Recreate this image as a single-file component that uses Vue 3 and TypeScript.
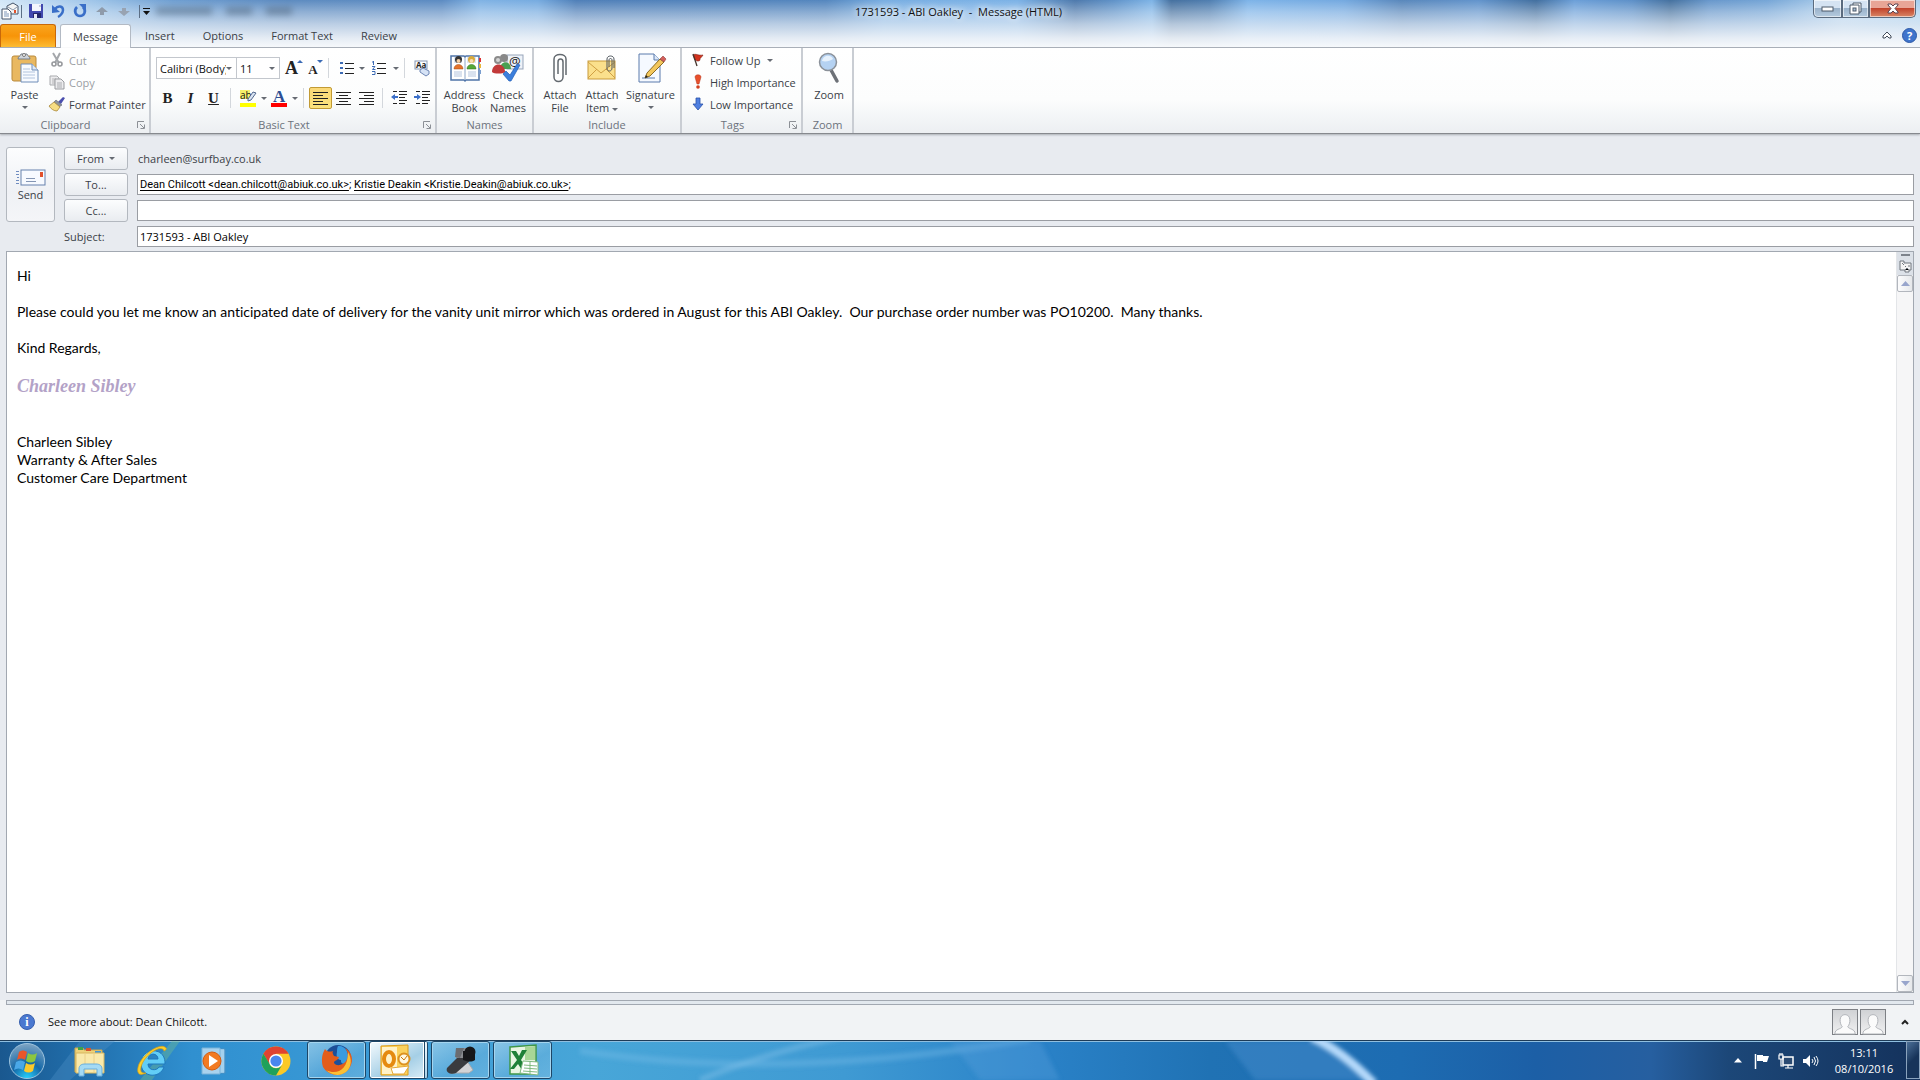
<script setup lang="ts">
import { ref } from 'vue'

const fonts = ['Calibri (Body)', 'Arial', 'Verdana']
const sizes = ['11', '12', '14']
const fontName = ref(fonts[0])
const fontSize = ref(sizes[0])
const subject = ref('1731593 - ABI Oakley')
const cc = ref('')
const tabs = ['Insert', 'Options', 'Format Text', 'Review']
const recipients = [
  { label: 'Dean Chilcott <dean.chilcott@abiuk.co.uk>', href: 'mailto:dean.chilcott@abiuk.co.uk' },
  { label: 'Kristie Deakin <Kristie.Deakin@abiuk.co.uk>', href: 'mailto:Kristie.Deakin@abiuk.co.uk' },
]
</script>

<template>
  <div class="screen">
    <header class="glass">
      <div class="titlebar">
        <div class="quick">
          <svg class="app-ico" width="18" height="18" viewBox="0 0 18 18"><path d="M6 4l6-3 5 3v8H6z" fill="#f4f4f4" stroke="#44546a"/><path d="M7 5l5 3 4-3" fill="none" stroke="#8a98ac"/><rect x="13" y="8" width="2" height="3" fill="#e0502a"/><path d="M1 7h6l3 3v7H1z" fill="#fff" stroke="#44546a"/><path d="M3 10h3M3 12h5M3 14h5" stroke="#7b95b8"/></svg>
          <i class="bar"></i>
          <button class="q" aria-label="Save"><svg width="14" height="14" viewBox="0 0 14 14"><path d="M0 0h14v14H1l-1-1z" fill="#4148ae"/><path d="M3 0h9v7H3z" fill="#f4f6fc"/><path d="M10 2h2" stroke="#99b"/><path d="M4 9h8v5H4z" fill="#23276c"/><path d="M5 10h3v4H5z" fill="#e8eaf6"/></svg></button>
          <button class="q" aria-label="Undo"><svg width="14" height="14" viewBox="0 0 14 14"><path d="M4 5c3-4 8-3 8 1 0 3-3 6-5 7" fill="none" stroke="#3a6fc8" stroke-width="2.500"/><path d="M1 1l0 8 8-1z" fill="#3a6fc8"/></svg></button>
          <button class="q" aria-label="Redo"><svg width="14" height="14" viewBox="0 0 14 14"><path d="M4 3c-4 4-1 9 3 9s7-5 3-9" fill="none" stroke="#3a6fc8" stroke-width="2.600"/><path d="M6 0h7v7z" fill="#3a6fc8"/></svg></button>
          <button class="q" aria-label="Previous item"><svg width="14" height="14" viewBox="0 0 14 14"><path d="M7 3l6 5H9v3H5V8H1z" fill="#8f9bab"/></svg></button>
          <button class="q" aria-label="Next item"><svg width="14" height="14" viewBox="0 0 14 14"><path d="M7 12l6-5H9V4H5v3H1z" fill="#98a3b2"/></svg></button>
          <i class="bar tight"></i>
          <button class="more" aria-label="Customize toolbar"><svg width="7" height="7" viewBox="0 0 7 7"><path d="M0 0h7v1H0zM0 3h7L3.500 7z" fill="#111"/></svg></button>
          <div class="ghost"><b></b><b></b><b></b></div>
        </div>
        <h1>1731593 - ABI Oakley&nbsp; -&nbsp; Message (HTML)</h1>
        <div class="winbtns">
          <button class="min" aria-label="Minimize"><svg width="14" height="8" viewBox="0 0 14 8"><rect x="1" y="2" width="11" height="4" fill="#fff" stroke="#4d5a6b"/></svg></button>
          <button class="max" aria-label="Restore"><svg width="14" height="14" viewBox="0 0 14 14"><path d="M4 1h8v9h-2v2H1V3h3z" fill="#fff" stroke="#4d5a6b"/><path d="M4 3h6v7" fill="none" stroke="#4d5a6b"/><rect x="4" y="6" width="3" height="3" fill="#a9c0d6" stroke="#4d5a6b"/></svg></button>
          <button class="close" aria-label="Close"><svg width="12" height="11" viewBox="0 0 12 11"><path d="M1 1h3l2 2 2-2h3v1L8 5.500 11 9v1H8L6 8l-2 2H1V9l3-3.500L1 2z" fill="#fff" stroke="#5b4350"/></svg></button>
        </div>
      </div>
      <nav class="tabs">
        <button class="file">File</button>
        <button class="tab on">Message</button>
        <button v-for="t in tabs" :key="t" class="tab">{{ t }}</button>
        <span class="grow"></span>
        <button class="chev" aria-label="Minimize the ribbon"><svg width="10" height="9" viewBox="0 0 10 9"><path d="M1 5l4-4 4 4v2H7L5 5 3 7H1z" fill="#fff" stroke="#414b59"/></svg></button>
        <button class="help" aria-label="Help">?</button>
      </nav>
    </header>

    <section class="ribbon">
      <div class="group clip">
        <div class="area">
          <button class="big paste">
            <svg width="30" height="32" viewBox="0 0 30 32"><rect x="2" y="4" width="24" height="25" rx="2" fill="#e9b860" stroke="#b98a3c"/><path d="M8 7c0-3 3-3 3-5h6c0 2 3 2 3 5z" fill="#cfd4da" stroke="#777f88"/><circle cx="14" cy="3" r="1.500" fill="#fff" stroke="#777"/><path d="M11 12h11l6 6v12H11z" fill="#f8fbff" stroke="#6f8db8"/><path d="M22 12v6h6" fill="#dce8f6" stroke="#6f8db8"/><path d="M13 17h7M13 20h12M13 23h12M13 26h12" stroke="#b2c4de"/></svg>
            <span>Paste</span><i class="dn"></i>
          </button>
          <div class="stack">
            <button class="sm off"><svg width="16" height="16" viewBox="0 0 16 16"><path d="M4 1l6 10M11 1L6 11" stroke="#a4a7ab" stroke-width="2"/><circle cx="5" cy="12" r="2" fill="none" stroke="#97999d" stroke-width="1.600"/><circle cx="11" cy="12" r="2" fill="none" stroke="#97999d" stroke-width="1.600"/></svg>Cut</button>
            <button class="sm off"><svg width="16" height="16" viewBox="0 0 16 16"><path d="M1 2h7l2 2v7H1z" fill="#ececee" stroke="#a9abae"/><path d="M3 5h4M3 7h4M3 9h3" stroke="#b4b4b6"/><path d="M6 5h6l3 3v7H6z" fill="#ececee" stroke="#999b9f"/><path d="M8 9h5M8 11h5M8 13h5" stroke="#aaacb0"/></svg>Copy</button>
            <button class="sm"><svg width="16" height="16" viewBox="0 0 16 16"><path d="M9 6l5-5 2 1-4 6z" fill="#4a4fae"/><path d="M7 4l6 5-3 2-5-5z" fill="#8c929c" stroke="#5e646e" stroke-width=".6"/><path d="M5 6l6 5-3 4C5 15 2 13 0 10z" fill="#f6dd83" stroke="#a8873a" stroke-width=".8"/></svg>Format Painter</button>
          </div>
        </div>
        <div class="cap launch">Clipboard<svg class="lnch" width="8" height="8" viewBox="0 0 8 8"><path d="M.5 7V.5H7M3 3l4 4M7.500 3.500v4h-4" fill="none" stroke="#8c9096"/></svg></div>
      </div>

      <div class="group basic">
        <div class="area rows">
          <div class="line">
            <span class="combo nm"><select v-model="fontName" aria-label="Font"><option v-for="f in fonts" :key="f">{{ f }}</option></select><i class="dn"></i></span>
            <span class="combo sz"><select v-model="fontSize" aria-label="Font size"><option v-for="s in sizes" :key="s">{{ s }}</option></select><i class="dn"></i></span>
            <button class="g w23 serif" aria-label="Grow font"><b class="ga">A</b><i class="tu"></i></button>
            <button class="g w20 serif" aria-label="Shrink font"><b class="gb">A</b><i class="td"></i></button>
            <i class="vs"></i>
            <button class="g w25" aria-label="Bullets"><svg width="14" height="14" viewBox="0 0 14 14"><path d="M0 1h3v2H0zM0 6h3v2H0zM0 11h3v2H0z" fill="#3d6bb5"/><path d="M5 2.500h9M5 7.500h9M5 12.500h9" stroke="#222"/></svg></button><i class="dn"></i>
            <button class="g w28" aria-label="Numbering"><svg width="14" height="14" viewBox="0 0 14 14"><path d="M1.500 0v4M0 1h2M0 5.500h3L.5 8.500h3M0 10.500h3v3H0" fill="none" stroke="#3d6bb5"/><path d="M5 2.500h9M5 7.500h9M5 12.500h9" stroke="#222"/></svg></button><i class="dn"></i>
            <i class="vs"></i>
            <button class="g w25" aria-label="Clear formatting"><svg width="17" height="17" viewBox="0 0 17 17"><rect x="1" y="1" width="12" height="8" fill="#fff" stroke="#8496b4"/><text x="2" y="8" font-size="8" font-weight="bold" font-family="Open Sans" fill="#222">Aa</text><path d="M6 10l3-2 6 3v3l-3 2-6-4z" fill="#d6e3f6" stroke="#6e86b4"/></svg></button>
          </div>
          <div class="line second">
            <button class="g w23 serif" aria-label="Bold"><b>B</b></button>
            <button class="g w23 serif" aria-label="Italic"><b><em>I</em></b></button>
            <button class="g w23 serif" aria-label="Underline"><b><u>U</u></b></button>
            <i class="vs"></i>
            <button class="g w25" aria-label="Highlight colour"><svg width="17" height="17" viewBox="0 0 17 17"><rect width="10" height="9" fill="#f6f06a"/><text x="0" y="9" font-size="10" font-family="Open Sans" fill="#111">ab</text><path d="M8 9l5-7 3 1-5 7-3 1z" fill="#d9e4f2" stroke="#52688e"/><rect y="13" width="16" height="4" fill="#ff0"/></svg></button><i class="dn"></i>
            <button class="g w25 serif" aria-label="Font colour"><svg width="17" height="17" viewBox="0 0 17 17"><text x="2" y="12" font-size="17" font-weight="bold" font-family="Liberation Serif" fill="#2d4f94">A</text><rect y="13" width="16" height="4" fill="red"/></svg></button><i class="dn"></i>
            <i class="vs"></i>
            <button class="g on" aria-label="Align left"><svg width="15" height="13" viewBox="0 0 15 13"><path d="M0 .5h15M0 3.500h10M0 6.500h15M0 9.500h10M0 12.500h15" stroke="#222"/></svg></button>
            <button class="g w23" aria-label="Centre"><svg width="15" height="13" viewBox="0 0 15 13"><path d="M0 .5h15M3 3.500h9M0 6.500h15M3 9.500h9M0 12.500h15" stroke="#222"/></svg></button>
            <button class="g w23" aria-label="Align right"><svg width="15" height="13" viewBox="0 0 15 13"><path d="M0 .5h15M5 3.500h10M0 6.500h15M5 9.500h10M0 12.500h15" stroke="#222"/></svg></button>
            <i class="vs slim"></i>
            <button class="g w23" aria-label="Decrease indent"><svg width="16" height="14" viewBox="0 0 16 14"><path d="M2 .5h4M8 .5h8M8 3.500h8M8 6.500h6M8 9.500h8M2 12.500h4M8 12.500h6" stroke="#222"/><path d="M0 6l4-3v2h3v2H4v2z" fill="#3b6fc9"/></svg></button>
            <button class="g w23" aria-label="Increase indent"><svg width="16" height="14" viewBox="0 0 16 14"><path d="M2 .5h4M8 .5h8M8 3.500h8M8 6.500h6M8 9.500h8M2 12.500h4M8 12.500h6" stroke="#222"/><path d="M7 6L3 3v2H0v2h3v2z" fill="#3b6fc9"/></svg></button>
          </div>
        </div>
        <div class="cap launch">Basic Text<svg class="lnch" width="8" height="8" viewBox="0 0 8 8"><path d="M.5 7V.5H7M3 3l4 4M7.500 3.500v4h-4" fill="none" stroke="#8c9096"/></svg></div>
      </div>

      <div class="group names">
        <div class="area">
          <button class="big w45"><svg width="32" height="32" viewBox="0 0 32 32"><path d="M2 4h13l1 1 1-1h13v24H17l-1 1-1-1H2z" fill="#fff" stroke="#4f74a8" stroke-width="1.500"/><path d="M16 5v23" stroke="#8da6c8"/><path d="M5 5h8v6H5z" fill="#dfe7f2"/><path d="M18 5h9v6h-9z" fill="#dfe7f2"/><circle cx="9.500" cy="7.500" r="3.500" fill="#333"/><circle cx="9.500" cy="9" r="2" fill="#f5cfa5"/><path d="M5 17c0-6 9-6 9 0z" fill="#e5742c" stroke="#a34a12" stroke-width=".5"/><circle cx="22.500" cy="7.500" r="3.500" fill="#d8a93a"/><circle cx="22.500" cy="9" r="2" fill="#f8ddb5"/><path d="M18 17c0-6 9-6 9 0z" fill="#55a838" stroke="#2d6b18" stroke-width=".5"/><path d="M5 20h8M5 22h8M5 24h8M19 20h8M19 22h8M19 24h8" stroke="#b4c5de"/><path d="M30 6h2v4h-2z" fill="#d33"/><path d="M30 12h2v4h-2z" fill="#e8b63a"/><path d="M30 18h2v4h-2z" fill="#7a9ecf"/></svg><span>Address<br>Book</span></button>
          <button class="big w42"><svg width="32" height="32" viewBox="0 0 32 32"><rect x="15" y="3" width="16" height="14" fill="#eef2f8" stroke="#97a5ba"/><text x="17" y="14" font-size="13" font-family="Open Sans" fill="#222">@</text><circle cx="12" cy="6" r="4" fill="#888"/><path d="M8 17c0-9 11-9 11 0z" fill="#4aa052"/><circle cx="6" cy="8" r="4" fill="#8b8b8b"/><circle cx="6" cy="8" r="2" fill="#d5d5d5"/><path d="M0 20c0-10 13-10 13 0-2 2-11 2-13 0z" fill="#c23a3a"/><path d="M11 22l3-3 4 4 7-11 3 1-9 16h-2z" fill="#3c7fdc" stroke="#2360b8" stroke-width=".7"/></svg><span>Check<br>Names</span></button>
        </div>
        <div class="cap">Names</div>
      </div>

      <div class="group include">
        <div class="area">
          <button class="big w42"><svg width="32" height="32" viewBox="0 0 32 32"><path d="M14 22V10c0-4 5-4 5 0v15c0 6-9 6-9 0V7c0-6 12-6 12 0v16" fill="none" stroke="#63696f" stroke-width="1.500"/></svg><span>Attach<br>File</span></button>
          <button class="big w42"><svg width="32" height="32" viewBox="0 0 32 32"><rect x="2" y="9" width="27" height="18" fill="#fbe08c" stroke="#c89a3a"/><path d="M2 10l13 11L29 10M2 26l9-9M29 26l-9-9" fill="none" stroke="#d0a044"/><path d="M23 15V8c0-2 3-2 3 0v8c0 4-5 4-5 0V7c0-4 7-4 7 0v9" fill="none" stroke="#51585f"/></svg><span>Attach<br>Item <i class="dn up"></i></span></button>
          <button class="big w55"><svg width="32" height="32" viewBox="0 0 32 32"><path d="M4 2h15l6 6v22H4z" fill="#f5f9ff" stroke="#5b7aac"/><path d="M19 2v6h6" fill="#dce8f8" stroke="#5b7aac"/><path d="M7 26h13" stroke="#5b7aac"/><path d="M12 21L25 7l4 3-14 14-5 2z" fill="#f3c75c" stroke="#8a6a24"/><path d="M25 7l3-3 3 3-2 3z" fill="#d4605b" stroke="#8c3c3c" stroke-width=".6"/><path d="M10 26l1-3 2 2z" fill="#222"/></svg><span>Signature</span><i class="dn"></i></button>
        </div>
        <div class="cap">Include</div>
      </div>

      <div class="group tags">
        <div class="area"><div class="stack">
          <button class="sm"><svg width="12" height="14" viewBox="0 0 12 14"><path d="M1 2c3-2 5 1 10 0-1 2-3 3-3 4s0 2-2 2-2-1-3-1z" fill="#d3321d" stroke="#7b1c10" stroke-width=".6"/><path d="M1 1l4 12" stroke="#45352e" stroke-width="1.300"/></svg>Follow Up<i class="dn"></i></button>
          <button class="sm"><svg width="12" height="14" viewBox="0 0 12 14"><path d="M3 2c0-3 6-3 6 0L7 9H5z" fill="#e8502c" stroke="#b2341a" stroke-width=".5"/><circle cx="6" cy="12" r="1.800" fill="#d2401f"/></svg>High Importance</button>
          <button class="sm"><svg width="12" height="14" viewBox="0 0 12 14"><path d="M4 1h4v6h3l-5 6-5-6h3z" fill="#4f7fe0" stroke="#2a50a8" stroke-width=".8"/></svg>Low Importance</button>
        </div></div>
        <div class="cap launch">Tags<svg class="lnch" width="8" height="8" viewBox="0 0 8 8"><path d="M.5 7V.5H7M3 3l4 4M7.500 3.500v4h-4" fill="none" stroke="#8c9096"/></svg></div>
      </div>

      <div class="group zoom">
        <div class="area"><button class="big w42"><svg width="32" height="32" viewBox="0 0 32 32"><path d="M18 18l6 11" stroke="#6d7177" stroke-width="3.500" stroke-linecap="round"/><circle cx="15" cy="10" r="8.500" fill="#b5d2f2" stroke="#8b9199" stroke-width="1.500"/><path d="M9 9c1-6 9-7 11-2-3 2-7 3-11 2z" fill="#e6f1fc"/></svg><span>Zoom</span></button></div>
        <div class="cap">Zoom</div>
      </div>
    </section>

    <main class="compose">
      <form class="head" @submit.prevent>
        <button class="send" type="submit"><svg width="30" height="18" viewBox="0 0 30 18"><path d="M0 2.500h3M0 5.500h3M1 8.500h2M0 11.500h3M0 14.500h3" stroke="#6f8cc0"/><rect x="5" y="1" width="24" height="15" fill="#f7faff" stroke="#6681ad"/><rect x="24" y="3" width="3" height="5" fill="#e1502c"/><path d="M10 9.500h9M10 12.500h10" stroke="#8496b4"/></svg>Send</button>
        <div class="fields">
          <div class="row"><button type="button" class="fb">From<i class="dn"></i></button><span class="from">charleen@surfbay.co.uk</span></div>
          <div class="row"><button type="button" id="to" class="fb">To...</button><div class="box people-box" role="textbox" contenteditable="true" aria-labelledby="to"><template v-for="r in recipients" :key="r.href"><a :href="r.href">{{ r.label }}</a>; </template></div></div>
          <div class="row"><button type="button" id="cc" class="fb">Cc...</button><input v-model="cc" class="box" type="text" aria-labelledby="cc"></div>
          <div class="row"><label for="subj">Subject:</label><input id="subj" v-model="subject" class="box" type="text"></div>
        </div>
      </form>
      <div class="editor">
        <article class="text" role="textbox" contenteditable="true" aria-label="Message body">
          <p>Hi</p>
          <p class="gap">Please could you let me know an anticipated date of delivery for the vanity unit mirror which was ordered in August for this ABI Oakley.&nbsp; Our purchase order number was PO10200.&nbsp; Many thanks.</p>
          <p class="gap">Kind Regards,</p>
          <p class="sig">Charleen Sibley</p>
          <p>Charleen Sibley</p>
          <p>Warranty &amp; After Sales</p>
          <p>Customer Care Department</p>
        </article>
        <div class="scroll">
          <div class="ruler"><i></i><svg width="13" height="13" viewBox="0 0 13 13"><path d="M1 2V1h4v2h7v7h-2v2H6v-2H1z" fill="#f4f4f4" stroke="#70767e"/><path d="M3 3l2 2M6 6l1 1M6 10l2-2 2 2M10 5v2" stroke="#70767e"/></svg></div>
          <button aria-label="Scroll up"><svg width="9" height="5" viewBox="0 0 9 5"><path d="M0 5l4.500-5L9 5z" fill="#98a5cc"/></svg></button>
          <span class="grow"></span>
          <button aria-label="Scroll down"><svg width="9" height="5" viewBox="0 0 9 5"><path d="M0 0l4.500 5L9 0z" fill="#98a5cc"/></svg></button>
        </div>
      </div>
    </main>

    <section class="people">
      <div class="split"></div>
      <div class="prow">
        <span class="info">i</span><span class="more-about">See more about: Dean Chilcott.</span>
        <span class="grow"></span>
        <svg v-for="n in 2" :key="n" class="pic" width="26" height="26" viewBox="0 0 26 26"><path d="M2 26c0-6 7-5 8-8-3-3-4-13 3-13s6 10 3 13c1 3 8 2 8 8z" fill="#fbfbfb" stroke="#adb0b5"/></svg>
        <button class="exp" aria-label="Expand"><svg width="8" height="6" viewBox="0 0 8 6"><path d="M1 5l3-3 3 3" fill="none" stroke="#222" stroke-width="2"/></svg></button>
      </div>
    </section>

    <footer class="taskbar">
      <svg class="streaks" viewBox="0 0 1920 40" preserveAspectRatio="none">
        <defs><filter id="soft"><feGaussianBlur stdDeviation="2"/></filter></defs>
        <path d="M50 40L80 0h35L70 40z" fill="#4f93c8" opacity=".35"/><path d="M140 40L172 0h8l-28 40z" fill="#7cc68a" opacity=".35"/>
        <g filter="url(#soft)"><path d="M580 10q200 32 450-12" fill="none" stroke="#7fc0ea" stroke-width="7" opacity=".35"/><path d="M700 40q60-26 140-44" fill="none" stroke="#8cc6ea" stroke-width="6" opacity=".4"/><path d="M950 0h90l20 40H980z" fill="#5aa0dc" opacity=".35"/><path d="M1225 0h90l60 40H1255z" fill="#4e93d2" opacity=".4"/><path d="M1312-4q30 14 62 48" fill="none" stroke="#b5d9fa" stroke-width="9"/></g>
      </svg>
      <button class="t start" aria-label="Start"><svg width="38" height="38" viewBox="0 0 38 38"><defs><radialGradient id="orb" cx=".5" cy="1" r="1"><stop offset="0" stop-color="#28d4ff"/><stop offset=".45" stop-color="#1468a8"/><stop offset="1" stop-color="#7fa5c4"/></radialGradient></defs><circle cx="19" cy="19" r="17.500" fill="url(#orb)" stroke="#9cc3de"/><path d="M11 10c3-2 5-2 8 0l-2 8c-3-2-5-2-8 0z" fill="#e9562a"/><path d="M20 11c3 2 6 2 9 0l-2 8c-3 2-6 2-9 0z" fill="#8cc63f"/><path d="M8 20c3-2 6-2 9 0l-2 8c-3-2-6-2-9 0z" fill="#4aa8e8"/><path d="M18 21c3 2 6 2 9 0l-2 8c-3 2-6 2-9 0z" fill="#fbc92c"/></svg></button>
      <button class="t" aria-label="Windows Explorer"><svg width="34" height="32" viewBox="0 0 34 32"><path d="M2 3h8l1 2h18v22H2z" fill="#eed27b" stroke="#c9a64c"/><path d="M5 2h5v3H5z" fill="#3da34a"/><path d="M13 3h5v3h-5z" fill="#d5542f"/><path d="M22 6h6v3h-6z" fill="#3f97d8"/><path d="M3 8h28v20H3z" fill="#f9e9ab" stroke="#d7b761"/><path d="M12 8v19M21 8v19" stroke="#ead089"/><path d="M6 31v-7c0-4 3-5 6-5h11c4 0 6 2 6 5v7h-5v-7H11v7z" fill="#a4daf4" stroke="#68aede"/></svg></button>
      <button class="t" aria-label="Internet Explorer"><svg width="34" height="34" viewBox="0 0 34 34"><path d="M30 20H13c0 7 9 7 11 3h5c-4 12-23 11-23-4C6 3 31 2 30 20zM13 15h10c0-6-9-7-10 0z" fill="#62cdf6" stroke="#1f78bd"/><path d="M31 4c-5-6-22 5-27 16-3 8-1 13 7 9-7 1-6-5-3-11C13 9 27 0 29 7c2-1 3-2 2-3z" fill="#fbcf2c" stroke="#d59c13" stroke-width=".7"/></svg></button>
      <button class="t" aria-label="Media Player"><svg width="32" height="32" viewBox="0 0 32 32"><path d="M8 4h19v24H8z" fill="#7fbde4" stroke="#4c90c2"/><path d="M23 4v24M25 4v24" stroke="#c9e6f8"/><path d="M4 3h18v26H4z" fill="#a9d2ee" stroke="#79b2d8"/><circle cx="14" cy="16" r="9" fill="#f27a22" stroke="#d45c10"/><path d="M11 10l9 6-9 6z" fill="#fff"/></svg></button>
      <button class="t" aria-label="Chrome"><svg width="32" height="32" viewBox="0 0 32 32"><circle cx="16" cy="16" r="14.500" fill="#fbc926"/><path d="M3.440 8.750A14.500 14.500 0 0 1 28.560 8.750H16L9.720 19.630z" fill="#df4332"/><path d="M3.440 8.750A14.500 14.500 0 0 0 16 30.500l6.280-10.880A7 7 0 0 1 9.940 19.500z" fill="#1fa15a"/><circle cx="16" cy="16" r="7" fill="#fff"/><circle cx="16" cy="16" r="5.600" fill="#4a86ee"/></svg></button>
      <button class="t run" aria-label="Firefox"><svg width="32" height="32" viewBox="0 0 32 32"><circle cx="17" cy="14" r="13" fill="#1d4f98"/><path d="M17 2c7-1 11 6 10 13-1 6-8 6-7 1-4 0-5-4-4-8 0-2 0-4 1-6z" fill="#3a9be0"/><path d="M4 5c2 3 5 3 8 2-1 2 0 3 1 5l5 1c-1 4-5 3-5 6 3 4 9 2 12-2 3-5 2-9-1-13 7 4 9 12 5 19-6 11-21 10-27 0C0 16 1 10 4 5z" fill="#e35d1b"/><path d="M27 8c4 7 4 15-2 20-7 5-15 3-20-2 9 5 22 2 22-18z" fill="#fbc034"/></svg></button>
      <button class="t run active" aria-label="Outlook"><svg width="32" height="32" viewBox="0 0 32 32"><path d="M2 2l27-1v30H2z" fill="#fbd15c" stroke="#dc9c1c"/><path d="M3 3h15v27H3z" fill="#fff2c8"/><ellipse cx="10" cy="15" rx="5" ry="7" fill="none" stroke="#e58a10" stroke-width="4"/><circle cx="25" cy="15" r="5.500" fill="#fff8e2" stroke="#dc9220" stroke-width="2"/><path d="M22 13l3 3 3-4" fill="none" stroke="#c97a10"/><path d="M12 24l18-2-5 8H14z" fill="#fff" stroke="#e5a939"/></svg></button>
      <button class="t run" aria-label="Recorder"><svg width="34" height="32" viewBox="0 0 34 32"><path d="M6 28l17-11 6 9-4 3H6z" fill="#d3d3d5" stroke="#a7a9ac"/><path d="M3 24L18 9l10 6-16 14c-4 2-11 0-9-5z" fill="#3a3b3e"/><path d="M12 4h13v10H12z" fill="#8a8c90"/><path d="M19 7h12v9c-4 3-9 1-12 0z" fill="#17181a"/><circle cx="26" cy="8" r="5.500" fill="#17181a"/><path d="M12 4h8l-4 10-5-1z" fill="#6b6d71"/></svg></button>
      <button class="t run" aria-label="Excel"><svg width="32" height="32" viewBox="0 0 32 32"><path d="M3 3l26-2v29H3z" fill="#e8f5e2" stroke="#3f9748" stroke-width="1.500"/><path d="M18 3l10-1v14H18z" fill="#a8d696"/><path d="M4 7h5l3 5 3-6h5l-6 10 7 10h-6l-4-6-4 5H3l7-9z" fill="#1f8038"/><path d="M16 17l15 1v13l-18-2z" fill="#fff" stroke="#7fb97f"/><path d="M17 21l13 1M17 24l13 1M16 27l14 1M23 18v12" stroke="#7fb97f"/></svg></button>
      <span class="grow"></span>
      <button class="y" aria-label="Show hidden icons"><svg width="8" height="5" viewBox="0 0 8 5"><path d="M0 4.500L4 0l4 4.500z" fill="#fff"/></svg></button>
      <button class="y" aria-label="Action centre"><svg width="16" height="16" viewBox="0 0 16 16"><path d="M1.500 1v15" stroke="#fff" stroke-width="1.500"/><path d="M3 2h6v1h6l-2 6h-4V8H3z" fill="#fff"/></svg></button>
      <button class="y" aria-label="Network"><svg width="16" height="16" viewBox="0 0 16 16"><rect x="5" y="4" width="10" height="8" fill="#2a4a72" stroke="#fff" stroke-width="1.500"/><path d="M7 15h8M10 12v3M1 2h4v4H1zM2 0v2M4 0v2M3 6v7h3" fill="none" stroke="#fff" stroke-width="1.200"/></svg></button>
      <button class="y" aria-label="Volume"><svg width="16" height="16" viewBox="0 0 16 16"><path d="M1 6h3l4-4v12l-4-4H1z" fill="#fff"/><path d="M10 6q2 2 0 4M12 4q3 4 0 8M14 3q4 5 0 10" fill="none" stroke="#fff"/></svg></button>
      <div class="clock"><time>13:11</time><time>08/10/2016</time></div>
      <button class="desk" aria-label="Show desktop"></button>
    </footer>
  </div>
</template>

<style>
body { margin: 0; background: #e8ebf0; }
</style>

<style scoped>
* { box-sizing: border-box; }
button { font: inherit; color: inherit; background: none; border: 0; padding: 0; }
svg { display: block; flex: none; overflow: visible; }
.grow { flex: 1; }
.screen { min-height: 100vh; display: flex; flex-direction: column; font-family: "Open Sans", "Noto Sans", sans-serif; font-size: 11px; line-height: 13px; color: #3b3f47; background: #e8ebf0; }
.dn { flex: none; display: inline-block; width: 0; height: 0; border: 3px solid transparent; border-top-color: #666b73; border-bottom: 0; }
.dn.up { vertical-align: middle; }

.glass { background:
  linear-gradient(#ffffff00, #ffffff50 12px, #e6edf5b0 24px, #f2f5f9e8 38px, #f8fafc),
  linear-gradient(90deg, #d3e7f8, #9cc3e8 5%, #6f9fd2 9%, #5d8bc0 15%, #5c8bc2 23%, #7fb2e4 25%, #76abe0 28%, #4f7fb8 30%, #5486be 43%, #78aee2 46%, #7cb2e6 53%, #4d79ac 56%, #5f92c8 58%, #7db3e6 60%, #45709f 61%, #4f7eb0 63%, #7db3e8 65%, #74a9e0 70%, #5987bb 73%, #6294cc 77%, #426f9f 80%, #6b9fd8 82%, #5d90c8 85%, #45719f 87%, #6797cb 89%, #75a5d6 92%, #b5d4ef 96%, #a5cdee); }
.titlebar { display: flex; height: 24px; }
.quick { flex: 1; display: flex; align-items: center; padding-left: 1px; height: 22px; }
.q { width: 22px; display: flex; justify-content: center; }
.bar { width: 1px; height: 13px; background: #5c6f86; margin: 0 3px 0 2px; }
.bar.tight { margin: 0 3px 0 4px; }
.ghost { display: flex; gap: 14px; margin-left: 6px; filter: blur(3px); opacity: .35; }
.ghost b { width: 26px; height: 8px; background: #345; }
.ghost b:first-child { width: 56px; }
h1 { margin: 0; font: inherit; line-height: 23px; color: #111; text-shadow: 0 0 6px #fff, 0 0 8px #fff; }
.winbtns { flex: 1; display: flex; justify-content: flex-end; align-items: flex-start; padding-right: 4px; }
.winbtns button { height: 18px; display: flex; align-items: center; justify-content: center; border: 1px solid #5b6b7e; border-top: 0; box-shadow: inset 0 0 0 1px #ffffff90; }
.min { width: 29px; background: linear-gradient(#d5e3f2 50%, #9ab2ca 50%, #b5cbdf); border-radius: 0 0 0 5px; }
.max { width: 27px; background: linear-gradient(#d5e3f2 50%, #9ab2ca 50%, #b5cbdf); }
.close { width: 47px; background: linear-gradient(#e8a596 45%, #c2442c 50%, #d98766); border-radius: 0 0 5px 0; }

.tabs { display: flex; height: 24px; border-bottom: 1px solid #a9b0b9; align-items: flex-end; }
.file { width: 56px; height: 23px; color: #fff; background: linear-gradient(#f9a51f, #f79408 50%, #fdbc33); border: 1px solid #c8680a; border-bottom: 0; border-radius: 3px 3px 0 0; margin-right: 4px; }
.tab { height: 23px; padding: 0 14px; }
.tab.on { width: 71px; padding: 0; height: 24px; background: #fff; border: 1px solid #b3bac4; border-bottom: 0; border-radius: 3px 3px 0 0; margin-bottom: -1px; }
.chev { padding: 0 10px 7px 0; }
.help { width: 15px; height: 15px; margin: 0 3px 4px 0; border-radius: 50%; background: #3f74cc; border: 1px solid #2c58a6; color: #fff; font-weight: bold; }

.ribbon { display: flex; height: 86px; background: linear-gradient(#fff, #fcfdfd 60%, #eceff2); border-bottom: 1px solid #86898e; box-shadow: 0 1px 2px #a9adb3; }
.group { display: flex; flex-direction: column; border-right: 2px solid #c9cdd3; }
.area { flex: 1; display: flex; padding-top: 1px; }
.cap { height: 17px; position: relative; text-align: center; color: #6c727c; line-height: 17px; }
.cap.launch { padding-right: 18px; }
.lnch { position: absolute; right: 4px; top: 5px; }
.clip { width: 151px; }
.basic { width: 286px; }
.names { width: 97px; }
.include { width: 148px; }
.tags { width: 121px; }
.zoom { width: 51px; }
.big { display: flex; flex-direction: column; align-items: center; padding-top: 3px; }
.big span { margin-top: 4px; white-space: nowrap; }
.big > .dn { margin-top: 5px; }
.paste { width: 49px; }
.w42 { width: 42px; }
.w45 { width: 45px; }
.w55 { width: 55px; }
.names .area, .include .area, .zoom .area { padding-left: 5px; }
.stack { display: flex; flex-direction: column; }
.sm { height: 22px; display: flex; align-items: center; gap: 4px; white-space: nowrap; }
.off { color: #9b9ea3; }
.tags .area { padding-left: 10px; }
.tags .sm { gap: 6px; }
.rows { flex-direction: column; padding-left: 5px; }
.line { display: flex; height: 22px; align-items: center; margin-top: 8px; }
.combo { display: flex; align-items: center; height: 22px; background: #fff; border: 1px solid #c3c7cd; padding-right: 4px; }
.combo select { flex: 1; min-width: 0; appearance: none; border: 0; padding: 0 0 0 3px; background: none; font: inherit; color: #111; overflow: hidden; }
.nm { width: 81px; }
.sz { width: 43px; border-left: 0; }
.g { position: relative; height: 22px; display: flex; align-items: center; justify-content: center; color: #222; }
.serif { font: 15px/22px "Liberation Serif", serif; }
.w20 { width: 20px; }
.w23 { width: 23px; }
.w25 { width: 25px; }
.w28 { width: 28px; }
.ga { font-size: 18px; }
.gb { font-size: 13px; padding-top: 3px; }
.tu, .td { position: absolute; right: 0; top: 3px; border: 3px solid transparent; }
.tu { border-bottom-color: #3b6bb5; border-top: 0; }
.td { border-top-color: #3b6bb5; border-bottom: 0; }
.vs { width: 1px; height: 20px; background: #d3d7dc; margin: 0 5px; }
.vs.slim { margin: 0 4px; }
.g.on { width: 23px; background: linear-gradient(#fbd978, #fbe27c); border: 1px solid #c29b35; border-radius: 2px; }

.compose { flex: 1; display: flex; flex-direction: column; padding: 13px 6px 7px; }
.head { display: flex; gap: 9px; }
.send { width: 49px; height: 75px; display: flex; flex-direction: column; align-items: center; justify-content: center; gap: 1px; background: linear-gradient(#fcfdfe, #eff1f5 60%, #f4f5f8); border: 1px solid #b3b8bf; border-radius: 3px; }
.fields { flex: 1; display: flex; flex-direction: column; gap: 3px; }
.row { display: flex; align-items: center; gap: 9px; height: 23px; }
.fb { width: 64px; height: 23px; display: flex; align-items: center; justify-content: center; gap: 5px; background: linear-gradient(#fcfdfe, #e9ecf0); border: 1px solid #b3b8bf; border-radius: 3px; }
.from { padding-left: 1px; }
.row label { width: 64px; }
.box { flex: 1; height: 21px; border: 1px solid #9a9da3; background: #fff; padding: 0 2px; font: inherit; line-height: 19px; color: #000; outline: 0; white-space: nowrap; }
.people-box { font-family: Roboto, "Open Sans", sans-serif; }
.box a { color: #000; text-underline-offset: 2px; }
.editor { flex: 1; display: flex; margin-top: 3px; background: #fff; border: 1px solid #a2a8b1; }
.text { flex: 1; padding: 15px 10px; font: 14px/18px Lato, "Open Sans", sans-serif; font-variant-ligatures: none; color: #000; outline: 0; }
.text p { margin: 0; }
.text .gap { margin-top: 18px; }
.text .sig { margin: 18px 0 36px; font: italic bold 18px/22px "Liberation Serif", serif; color: #b3a2c7; }
.scroll { width: 17px; display: flex; flex-direction: column; background: #f6f6f7; border-left: 1px solid #e3e5e8; }
.ruler { height: 23px; background: #dce1e8; display: flex; flex-direction: column; align-items: center; gap: 4px; padding-top: 2px; }
.ruler i { width: 9px; height: 2px; background: #7d838c; }
.scroll button { height: 17px; display: flex; align-items: center; justify-content: center; border: 1px solid #b2b6bd; border-radius: 2px; background: linear-gradient(90deg, #fcfcfd, #e6e8eb); }

.people { background: #f1f3f5; }
.split { height: 5px; margin: 0 6px; border: 1px solid #a2a8b1; background: #e2e8ee; }
.prow { height: 35px; display: flex; align-items: center; padding: 0 11px 2px 19px; }
.info { width: 16px; height: 16px; border-radius: 50%; background: #4a78d0; border: 1px solid #365fae; color: #fff; font: bold 12px/14px "Liberation Serif", serif; text-align: center; margin-right: 13px; }
.more-about { color: #111; }
.pic { background: linear-gradient(#d0d2d5, #f0f0f1); border: 1px solid #7d8085; margin-right: 2px; }
.exp { padding: 0 0 0 13px; }

.taskbar { position: relative; display: flex; height: 40px; border-top: 1px solid #1e3c58; box-shadow: inset 0 1px #8fbfe0; color: #fff; background: linear-gradient(90deg, #1a588f, #2272b0 5%, #3090d0 10%, #3b9bd6 20%, #48a6d8 31%, #3f9ad3 44%, #2a82c8 54%, #2072b4 63%, #1d6cb2 73%, #1c5fa6 80%, #265fa0 86%, #1c4778 90%, #14325c); }
.streaks { position: absolute; inset: 0; width: 100%; height: 100%; overflow: hidden; }
.t { position: relative; width: 62px; display: flex; align-items: center; justify-content: center; }
.start { width: 59px; padding-right: 5px; }
.run { width: 59px; margin-right: 3px; height: 38px; border: 1px solid #1d4667; border-radius: 3px; box-shadow: inset 0 0 0 1px #a5d5ef; background: linear-gradient(150deg, #b5dcf0a0, #7fbbe060 60%, #8cc6e870); }
.active { background: linear-gradient(150deg, #f4fafd, #a5cfe6 60%, #d8ecf6); box-shadow: inset 0 0 0 1px #fff; border-right: 4px double #1d4667; padding-right: 4px; }
.y { position: relative; width: 24px; display: flex; align-items: center; justify-content: center; }
.clock { position: relative; width: 84px; display: flex; flex-direction: column; align-items: center; padding-top: 4px; line-height: 16px; }
.desk { position: relative; width: 14px; height: 38px; border: 1px solid #8aa3bd; background: linear-gradient(135deg, #4b6f97, #17345a 50%); }
</style>
